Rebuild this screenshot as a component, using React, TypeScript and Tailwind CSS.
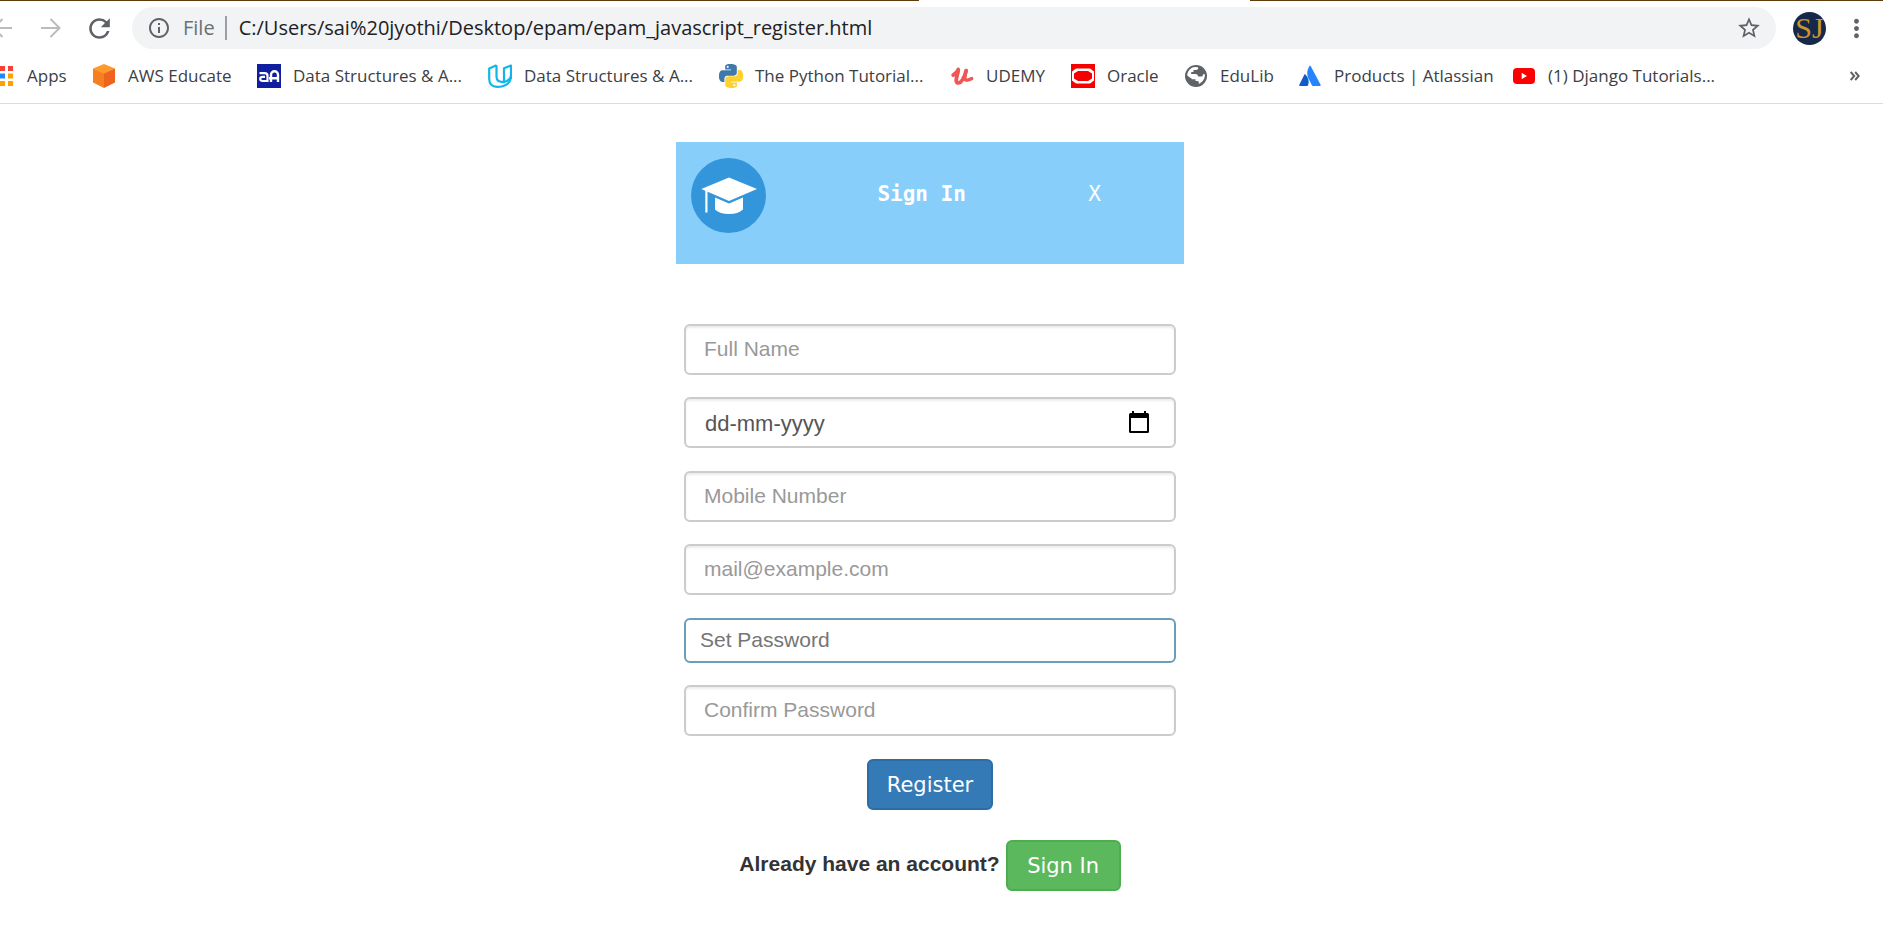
import React from "react";
import { MdRefresh, MdInfoOutline, MdStarBorder, MdMoreVert } from "react-icons/md";

const uiFont = "font-['Open_Sans','Noto_Sans',sans-serif]";

function ArrowIcon({ back = false }: { back?: boolean }) {
  return (
    <svg width="20" height="20" viewBox="0 0 20 20" fill="none" stroke="#babcbe" strokeWidth="2" aria-hidden="true">
      {back ? <path d="M20 10H1.5M10.5 1 1.5 10l9 9" /> : <path d="M0 10h18.5M9.5 1l9 9-9 9" />}
    </svg>
  );
}

function AwsIcon() {
  return (
    <svg width="24" height="24" viewBox="0 0 24 24" aria-hidden="true">
      <path d="M12 0 23 4.5 12 10 1 4.5Z" fill="#ff9a2a" />
      <path d="M1 4.5 12 9.5V24L1 18.5Z" fill="#f58020" />
      <path d="M23 4.5 12 9.5V24l11-5.5Z" fill="#ee6320" />
    </svg>
  );
}

function AnalyticsIcon() {
  return (
    <svg width="24" height="24" viewBox="0 0 24 24" aria-hidden="true">
      <rect width="24" height="24" fill="#101ea0" />
      <g fill="none" stroke="#fff">
        <path d="M2.5 9.2h5.2q2.8 0 2.8 2.6V17H5.6q-2.4 0-2.4-2.1t2.4-2.1H8" strokeWidth="2.2" />
        <path d="M14 18v-7.2a3.500 3.500 0 0 1 7 0V18M12 14.2h9" strokeWidth="2.4" />
      </g>
    </svg>
  );
}

function UdacityIcon() {
  return (
    <svg width="24" height="24" viewBox="0 0 24 24" fill="none" stroke="#12b5ea" strokeWidth="2.2" strokeLinejoin="round" aria-hidden="true">
      <path d="M8.5 1.3 1.2 4.500v10.300c0 5 3 8 7.800 8 8.500 0 14-4 14-10V1.500L16 4.300V18" />
      <path d="M8.5 1.3v11.500c0 3.400 2.600 5.400 7.500 5.400 3.800-1.400 7-3.700 7-7" />
    </svg>
  );
}

function PythonIcon() {
  return (
    <svg width="24" height="24" viewBox="0 0 24 24" aria-hidden="true">
      <path
        fill="#3f78a9"
        d="M14.25.18l.9.2.73.26.59.3.45.32.34.34.25.34.16.33.1.3.04.26.02.2-.01.13V8.5l-.05.63-.13.55-.21.46-.26.38-.3.31-.33.25-.35.19-.35.14-.33.1-.3.07-.26.04-.21.02H8.77l-.69.05-.59.14-.5.22-.41.27-.33.32-.27.35-.2.36-.15.37-.1.35-.07.32-.04.27-.02.21v3.06H3.17l-.21-.03-.28-.07-.32-.12-.35-.18-.36-.26-.36-.36-.35-.46-.32-.59-.28-.73-.21-.88-.14-1.05-.05-1.23.06-1.22.16-1.04.24-.87.32-.71.36-.57.4-.44.42-.33.42-.24.4-.16.36-.1.32-.05.24-.01h.16l.06.01h8.16v-.83H6.18l-.01-2.75-.02-.37.05-.34.11-.31.17-.28.25-.26.31-.23.38-.2.44-.18.51-.15.58-.12.64-.1.71-.06.77-.04.84-.02 1.27.05zm-6.3 1.98l-.23.33-.08.41.08.41.23.34.33.22.41.09.41-.09.33-.22.23-.34.08-.41-.08-.41-.23-.33-.33-.22-.41-.09-.41.09z"
      />
      <path
        fill="#fdd22f"
        d="M21.1 6.11l.28.06.32.12.35.18.36.27.36.35.35.47.32.59.28.73.21.88.14 1.04.05 1.23-.06 1.23-.16 1.04-.24.86-.32.71-.36.57-.4.45-.42.33-.42.24-.4.16-.36.09-.32.05-.24.02-.16-.01h-8.22v.82h5.84l.01 2.76.02.36-.05.34-.11.31-.17.29-.25.25-.31.24-.38.2-.44.17-.51.15-.58.13-.64.09-.71.07-.77.04-.84.01-1.27-.04-1.07-.14-.9-.2-.73-.25-.59-.3-.45-.33-.34-.34-.25-.34-.16-.33-.1-.3-.04-.25-.02-.2.01-.13v-5.34l.05-.64.13-.54.21-.46.26-.38.3-.32.33-.24.35-.2.35-.14.33-.1.3-.06.26-.04.21-.02.13-.01h5.84l.69-.05.59-.14.5-.21.41-.28.33-.32.27-.35.2-.36.15-.36.1-.35.07-.32.04-.28.02-.21V6.07h2.09l.14.01zm-6.47 14.25l-.23.33-.08.41.08.41.23.33.33.23.41.08.41-.08.33-.23.23-.33.08-.41-.08-.41-.23-.33-.33-.23-.41-.08-.41.08z"
      />
    </svg>
  );
}

function UdemyIcon() {
  return (
    <svg width="24" height="24" viewBox="0 0 24 24" fill="none" stroke="#ef5656" strokeLinecap="round" strokeLinejoin="round" aria-hidden="true">
      <path d="M3.2 11C5 10.200 7.300 8 8.300 5.500 8.500 9 6 13 6.200 16.500c.2 3.800 4 2.800 6.300-.8 1.600-2.700 3-6 3.500-9" strokeWidth="3.8" />
      <path d="M16.5 6.500c-.8 3-1.800 6-1.500 8.300.3 2.200 3.500 1.600 6.800-.3" strokeWidth="3.2" />
    </svg>
  );
}

function OracleIcon() {
  return (
    <svg width="24" height="24" viewBox="0 0 24 24" aria-hidden="true">
      <rect width="24" height="24" fill="#f80000" />
      <path d="M5 4.5h14L23 7.500v9L19 19.500H5L1 16.500v-9Z" fill="#fff" />
      <path d="M7 7h10L21 9.500v5L17 17H7L3 14.500v-5Z" fill="#f80000" />
    </svg>
  );
}

function GlobeIcon() {
  return (
    <svg width="24" height="24" viewBox="0 0 24 24" aria-hidden="true">
      <circle cx="12" cy="12" r="11" fill="#5f6368" />
      <path
        fill="#fff"
        d="M14 3.200c.6 1.600-.3 2.800-2 2.800H9.500v2H7.200v2h4.300c1.800 0 2.500 1 2.500 2.500h3c1.600 0 2-.8 2-2.300h1.900c.2 4.200-2 8-6.400 9.800 1-1.700.2-3-1.500-3h-1.500v-1.800H8.300L3.200 11.500C3.500 7 6.500 3.300 11 3Z"
      />
    </svg>
  );
}

function AtlassianIcon() {
  return (
    <svg width="24" height="24" viewBox="0 0 24 24" aria-hidden="true">
      <path d="M7.600 10.700c-.4-.5-1-.4-1.300.1L1.300 20.700c-.3.6.1 1.300.8 1.300h7c.4 0 .7-.2.800-.5 1.600-3.200.7-7.900-2.300-10.800Z" fill="#1259c9" />
      <path d="M11.300 2.200c-2.700 4.300-2.500 9-.7 12.600l3.400 6.700c.1.300.5.500.8.500h7c.7 0 1.100-.7.800-1.300L12.800 2.200c-.3-.6-1.100-.6-1.500 0Z" fill="#2684ff" />
    </svg>
  );
}

function YoutubeIcon() {
  return (
    <svg width="24" height="24" viewBox="0 0 24 24" aria-hidden="true">
      <rect x="1" y="4" width="22" height="16" rx="4" fill="#f00" />
      <path d="M9.700 8.700v6.600l5.300-3.300Z" fill="#fff" />
    </svg>
  );
}

const bookmarks = [
  { label: "AWS Educate", Icon: AwsIcon, width: "w-[165px]" },
  { label: "Data Structures & A...", Icon: AnalyticsIcon, width: "w-[231px]" },
  { label: "Data Structures & A...", Icon: UdacityIcon, width: "w-[231px]" },
  { label: "The Python Tutorial...", Icon: PythonIcon, width: "w-[231px]" },
  { label: "UDEMY", Icon: UdemyIcon, width: "w-[121px]" },
  { label: "Oracle", Icon: OracleIcon, width: "w-[113px]" },
  { label: "EduLib", Icon: GlobeIcon, width: "w-[114px]" },
  { label: "Products | Atlassian", Icon: AtlassianIcon, width: "w-[214px]" },
  { label: "(1) Django Tutorials...", Icon: YoutubeIcon, width: "w-[220px]" },
];

function AppsIcon() {
  const rows = [
    ["#f44336", "#f44336"],
    ["#1e88ff", "#ffa000"],
    ["#ffa000", "#ffa000"],
  ];
  return (
    <svg width="13" height="20" viewBox="0 0 13 20" aria-hidden="true">
      {rows.map((row, r) =>
        row.map((fill, c) => <rect key={`${r}-${c}`} x={c * 8} y={r * 7.5} width="5" height="5" fill={fill} />)
      )}
    </svg>
  );
}

function BrowserBar() {
  return (
    <header className={`border-b border-[#dadce0] ${uiFont}`}>
      <div className="flex h-px">
        <div className="w-[919px] bg-[#5f3a0a]" />
        <div className="w-[331px]" />
        <div className="flex-1 bg-[#5f3a0a]" />
      </div>
      <div className="flex h-[54px] items-center">
        <button type="button" aria-label="Back" className="w-3 shrink-0 overflow-hidden">
          <span className="flex justify-end">
            <span className="shrink-0">
              <ArrowIcon back />
            </span>
          </span>
        </button>
        <button type="button" aria-label="Forward" className="ml-[29px]">
          <ArrowIcon />
        </button>
        <button type="button" aria-label="Reload" className="ml-[23px]">
          <MdRefresh size={31} color="#5f6368" />
        </button>
        <div className="ml-[17px] flex h-[42px] flex-1 items-center rounded-full bg-[#f1f3f4] pr-[14px] pl-[15px]">
          <MdInfoOutline size={24} color="#5f6368" />
          <span className="ml-3 text-xl text-[#6b6f74]">File</span>
          <span className="ml-[10px] h-6 w-[2px] bg-[#9aa0a6]" />
          <input
            aria-label="Address"
            defaultValue="C:/Users/sai%20jyothi/Desktop/epam/epam_javascript_register.html"
            className="ml-3 min-w-0 flex-1 bg-transparent text-xl text-[#202124] outline-none"
          />
          <button type="button" aria-label="Bookmark this page">
            <MdStarBorder size={26} color="#5f6368" />
          </button>
        </div>
        <button
          type="button"
          aria-label="Profile"
          className="ml-[17px] flex size-[33px] items-center justify-center rounded-full bg-[#16294a] font-['Liberation_Serif',serif] text-[30px] leading-none text-[#c9982b]"
        >
          SJ
        </button>
        <button type="button" aria-label="Menu" className="mr-3 ml-4">
          <MdMoreVert size={29} color="#5f6368" />
        </button>
      </div>
      <nav className="flex h-12 items-center pb-[7px] text-[17px] text-[#3c4043]">
        <a href="#apps" className="flex w-[92px] shrink-0 items-center gap-[14px]">
          <AppsIcon />
          Apps
        </a>
        {bookmarks.map(({ label, Icon, width }, i) => (
          <a key={i} href="#bookmark" className={`flex shrink-0 items-center gap-3 whitespace-nowrap ${width}`}>
            <Icon />
            {label}
          </a>
        ))}
        <button type="button" aria-label="More bookmarks" className="mr-[23px] ml-auto">
          <svg width="10" height="10" viewBox="0 0 10 10" fill="none" stroke="#5f6368" strokeWidth="2" aria-hidden="true">
            <path d="M.7 1l3.500 4L.7 9M5.200 1l3.500 4-3.500 4" />
          </svg>
        </button>
      </nav>
    </header>
  );
}

function CapLogo() {
  return (
    <svg width="75" height="75" viewBox="0 0 75 75" aria-hidden="true">
      <circle cx="37.5" cy="37.5" r="37.5" fill="#3396da" />
      <g fill="#fff">
        <path d="M38 19.500 66 31 38 43 10.300 31Z" />
        <path d="M14.300 32h2.200v22.500h-2.200Z" />
        <path d="M24 39.500 38 45.500l14-6V51.500Q47 56 38 56T24 51.500Z" />
      </g>
    </svg>
  );
}

const fieldClass =
  "h-[51px] w-full rounded-md border-2 border-[#ccc] bg-white px-[18px] pb-[2px] text-[21px] text-[#555] shadow-[inset_0_2px_2px_rgba(0,0,0,0.075)] outline-none placeholder:text-[#999]";

const buttonClass = "h-[51px] rounded-md border-2 pt-[2px] font-['DejaVu_Sans',sans-serif] text-[21px] text-white";

function RegisterForm() {
  return (
    <form className="flex w-full max-w-[492px] flex-col items-center gap-[23px]" onSubmit={(e) => e.preventDefault()}>
      <div className="flex w-full flex-col gap-[22px]">
        <input type="text" aria-label="Full Name" placeholder="Full Name" className={fieldClass} />
        <div className="flex h-[51px] items-center rounded-md border-2 border-[#ccc] pr-[25px] pb-[2px] pl-[19px] shadow-[inset_0_2px_2px_rgba(0,0,0,0.075)]">
          <input
            type="text"
            aria-label="Date of birth"
            placeholder="dd-mm-yyyy"
            className="min-w-0 flex-1 pt-1 text-[22px] outline-none placeholder:text-[#555]"
          />
          <button type="button" aria-label="Open calendar">
            <svg width="20" height="22" viewBox="0 0 20 22" aria-hidden="true">
              <path
                d="M3 0h2v2h10V0h2v2h1.500A1.500 1.500 0 0 1 20 3.500v17a1.500 1.500 0 0 1-1.500 1.500h-17A1.500 1.500 0 0 1 0 20.500v-17A1.500 1.500 0 0 1 1.500 2H3ZM2 7v13h16V7Z"
                fillRule="evenodd"
              />
            </svg>
          </button>
        </div>
      </div>
      <div className="flex w-full flex-col gap-[22px]">
        <input type="tel" aria-label="Mobile Number" placeholder="Mobile Number" className={fieldClass} />
        <input type="email" aria-label="Email" placeholder="mail@example.com" className={fieldClass} />
      </div>
      <div className="flex w-full flex-col gap-[22px]">
        <input
          type="password"
          aria-label="Set Password"
          placeholder="Set Password"
          className="h-[45px] w-full rounded-md border-2 border-[#6a9db8] px-[14px] pb-[2px] text-[21px] outline-none placeholder:text-[#757575]"
        />
        <input type="password" aria-label="Confirm Password" placeholder="Confirm Password" className={fieldClass} />
      </div>
      <button type="submit" className={`w-[126px] border-[#2e6da4] bg-[#337ab7] ${buttonClass}`}>
        Register
      </button>
    </form>
  );
}

export default function App() {
  return (
    <div className="min-h-screen bg-white font-['Liberation_Sans',Arial,sans-serif]">
      <BrowserBar />
      <main className="flex flex-col items-center pt-[38px] pr-[23px]">
        <div className="flex h-[122px] w-full max-w-[508px] bg-[#87cefa] pt-4 pr-[83px] pl-[15px] font-['DejaVu_Sans_Mono',monospace] text-[21px] text-white">
          <div>
            <CapLogo />
          </div>
          <h1 className="flex-1 pt-[21px] pr-[11px] text-center font-bold">Sign In</h1>
          <button type="button" className="self-start pt-[21px]">
            X
          </button>
        </div>
        <div className="flex w-full flex-col items-center gap-[30px] pt-[60px]">
          <RegisterForm />
          <div className="flex items-center gap-[6px]">
            <strong className="pb-[3px] text-[21px] text-[#333]">Already have an account?</strong>
            <button type="button" className={`w-[115px] border-[#4cae4c] bg-[#5cb85c] ${buttonClass}`}>
              Sign In
            </button>
          </div>
        </div>
      </main>
    </div>
  );
}
